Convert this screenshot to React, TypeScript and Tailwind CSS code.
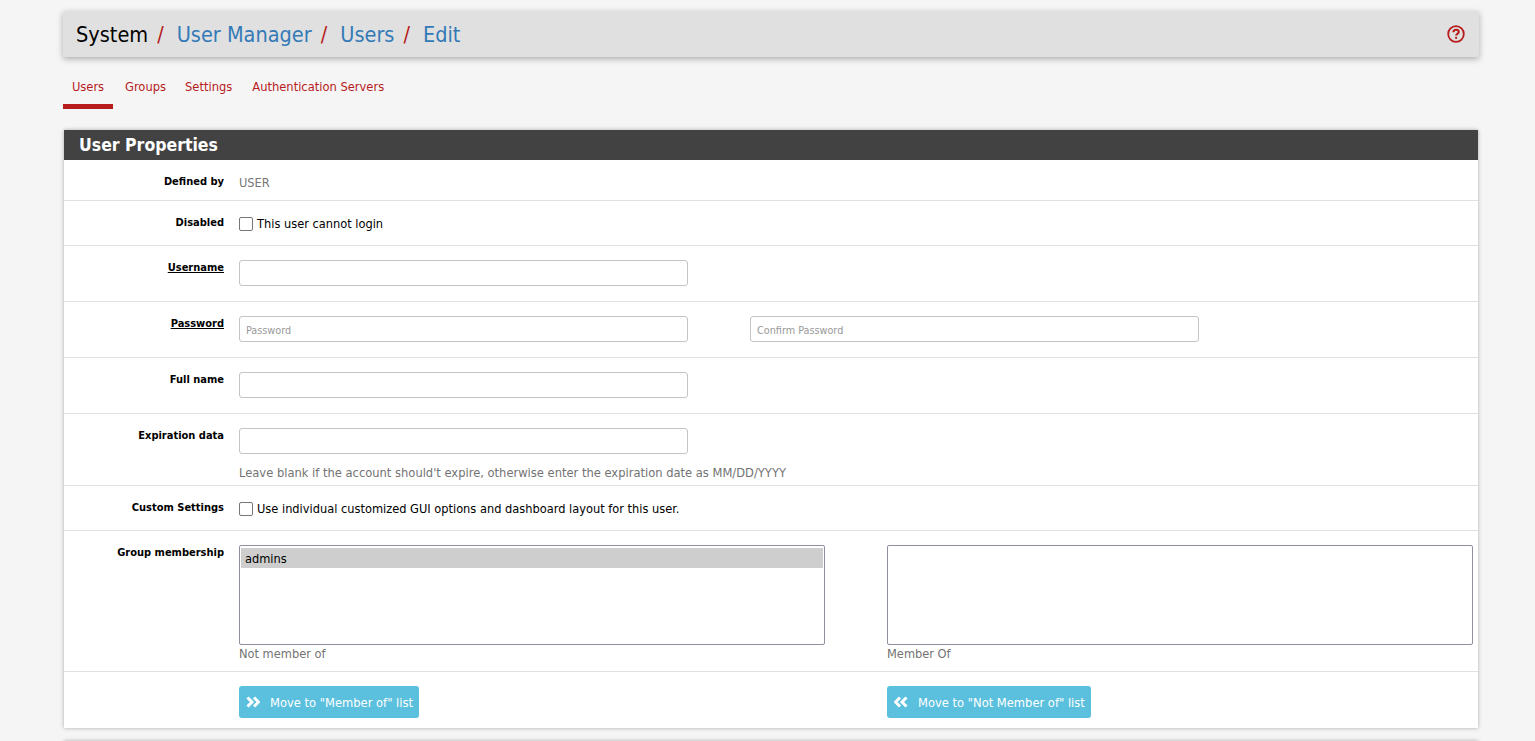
import React from "react";

const font = "font-['DejaVu_Sans_Condensed','DejaVu_Sans',sans-serif]";

const Row = ({ label, underline, className, children }: { label: string; underline?: boolean; className: string; children: React.ReactNode }) => (
  <div className={`flex border-b border-[#e0e0e0] ${className}`}>
    <div className={`w-[160px] shrink-0 pt-[15px] text-right text-[11px] leading-[14px] font-bold text-black ${underline ? "underline" : ""}`}>{label}</div>
    <div className="ml-[15px] min-w-0 flex-1 pt-[14px]">{children}</div>
  </div>
);

const TextInput = ({ placeholder }: { placeholder?: string }) => (
  <input
    placeholder={placeholder}
    className="block h-[26px] w-[449px] rounded-[3px] border border-[#c4c4c4] bg-white px-[6px] pt-[2px] text-[10.75px] text-[#555] placeholder:text-[#999]"
  />
);

const Check = ({ text }: { text: string }) => (
  <label className="flex items-center text-[12.7px] leading-[18px] text-black">
    <span className="mr-[4px] h-[14px] w-[14px] rounded-[2px] border border-[#767676] bg-white" />
    {text}
  </label>
);

const Chevrons = ({ flip }: { flip?: boolean }) => (
  <svg viewBox="0 0 14 12" className={`h-[12px] w-[14px] ${flip ? "rotate-180" : ""}`} fill="none" stroke="white" strokeWidth="3">
    <path d="M1.500 1.500 6 6l-4.500 4.500M8 1.500 12.500 6 8 10.500" />
  </svg>
);

const MoveButton = ({ text, flip, className }: { text: string; flip?: boolean; className: string }) => (
  <button className={`flex h-[32px] items-center rounded-[3px] bg-[#5bc0de] pl-[7px] text-[12.8px] text-white ${className}`}>
    <Chevrons flip={flip} />
    <span className="mt-[1px] ml-[10px] whitespace-nowrap">{text}</span>
  </button>
);

const Slash = () => <span className="mr-[13px] ml-[9px] text-[#b71c1c]">/</span>;

export default function App() {
  return (
    <div className={`h-[741px] overflow-hidden bg-[#f5f5f5] pt-[11px] pr-[56px] pl-[63px] ${font}`}>
      <div className="flex h-[46px] items-center justify-between rounded-[2px] bg-[#e0e0e0] pr-[14px] pl-[13px] text-[21.5px] shadow-[0_2px_6px_rgba(0,0,0,0.3)]">
        <div className="flex items-center pt-[2px] whitespace-nowrap">
          <span className="text-black">System</span>
          <Slash />
          <span className="text-[#337ab7]">User Manager</span>
          <Slash />
          <span className="text-[#337ab7]">Users</span>
          <Slash />
          <span className="text-[#337ab7]">Edit</span>
        </div>
        <svg viewBox="0 0 18 18" className="h-[18px] w-[18px]" fill="none">
          <circle cx="9" cy="9" r="7.800" stroke="#b71c1c" strokeWidth="1.800" />
          <path d="M6.400 7.200c0-1.600 1.200-2.500 2.700-2.500s2.600.9 2.600 2.200c0 1.900-2.500 1.800-2.500 3.500" stroke="#b71c1c" strokeWidth="2.100" />
          <rect x="8.100" y="11.800" width="2" height="2" fill="#b71c1c" />
        </svg>
      </div>

      <div className="mt-[20px] flex h-[32px] text-[12.8px] leading-[20px] text-[#b71c1c]">
        <div className="h-[32px] w-[50px] border-b-[5px] border-[#b71c1c] text-center">Users</div>
        <div className="ml-[12px]">Groups</div>
        <div className="ml-[19px]">Settings</div>
        <div className="ml-[20px]">Authentication Servers</div>
      </div>

      <div className="mx-px mt-[21px] bg-white shadow-[0_0_4px_rgba(0,0,0,0.3)]">
        <div className="flex h-[30px] items-center bg-[#424242] pt-[1px] pl-[15px] text-[17.5px] font-bold text-white">User Properties</div>
        <Row label="Defined by" className="h-[41px]">
          <div className="pt-[1px] text-[12.7px] leading-[16px] text-[#777]">USER</div>
        </Row>
        <Row label="Disabled" className="h-[45px]">
          <Check text="This user cannot login" />
        </Row>
        <Row label="Username" underline className="h-[56px]">
          <TextInput />
        </Row>
        <Row label="Password" underline className="h-[56px]">
          <div className="flex gap-[62px]">
            <TextInput placeholder="Password" />
            <TextInput placeholder="Confirm Password" />
          </div>
        </Row>
        <Row label="Full name" className="h-[56px]">
          <TextInput />
        </Row>
        <Row label="Expiration data" className="h-[72px]">
          <TextInput />
          <div className="mt-[11px] text-[12.8px] leading-[16px] text-[#737373]">Leave blank if the account should't expire, otherwise enter the expiration date as MM/DD/YYYY</div>
        </Row>
        <Row label="Custom Settings" className="h-[45px]">
          <Check text="Use individual customized GUI options and dashboard layout for this user." />
        </Row>
        <Row label="Group membership" className="h-[141px]">
          <div className="flex gap-[62px]">
            <div>
              <div className="h-[100px] w-[586px] rounded-[2px] border border-[#8f8f9d] px-[1px] py-[2px] text-[12.7px] leading-[21px] text-black">
                <div className="h-[20px] bg-[#cecece] pl-[4px]">admins</div>
              </div>
              <div className="text-[12.7px] leading-[17px] text-[#737373]">Not member of</div>
            </div>
            <div>
              <div className="h-[100px] w-[586px] rounded-[2px] border border-[#8f8f9d]" />
              <div className="text-[12.7px] leading-[17px] text-[#737373]">Member Of</div>
            </div>
          </div>
        </Row>
        <div className="flex h-[56px] items-start pt-[14px] pl-[175px]">
          <MoveButton text={'Move to "Member of" list'} className="w-[180px]" />
          <MoveButton text={'Move to "Not Member of" list'} flip className="ml-[468px] w-[204px]" />
        </div>
      </div>

      <div className="mx-px mt-[13px] h-[30px] bg-[#424242] shadow-[0_0_4px_rgba(0,0,0,0.3)]" />
    </div>
  );
}
